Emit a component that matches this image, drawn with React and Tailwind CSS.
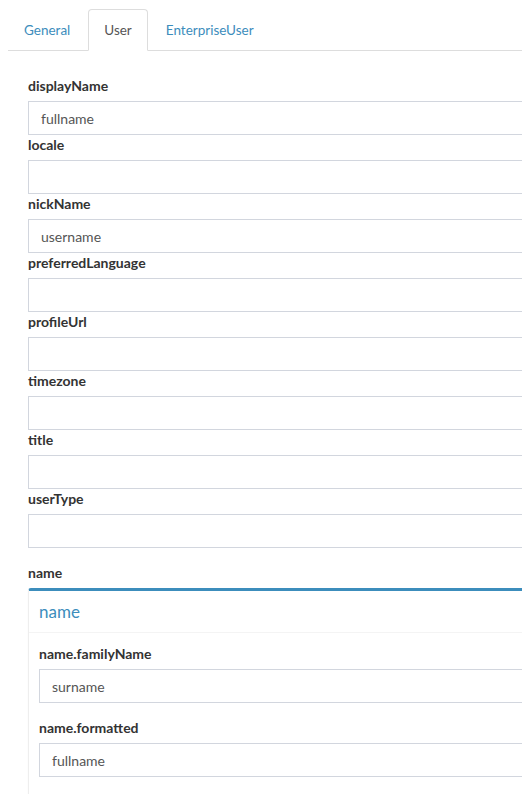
import React from "react";

const fields = [
  ["displayName", "fullname"],
  ["locale", ""],
  ["nickName", "username"],
  ["preferredLanguage", ""],
  ["profileUrl", ""],
  ["timezone", ""],
  ["title", ""],
  ["userType", ""],
];

function Field({ label, value, gap }) {
  return (
    <div className={gap ? "mb-[15px]" : ""}>
      <div className="text-[14px] leading-[20px] font-bold text-[#333] mb-[5px]">{label}</div>
      <div className="h-[34px] border border-[#d2d6de] px-[12px] flex items-center text-[14px] text-[#555]">
        {value}
      </div>
    </div>
  );
}

export default function App() {
  return (
    <div
      className="w-[522px] h-[794px] overflow-hidden bg-white"
      style={{ fontFamily: "Lato, 'Open Sans', sans-serif" }}
    >
      <div className="w-[640px] pl-2 pt-[9px]">
        <div className="flex border-b border-[#ddd] text-[13.5px] leading-[20px]">
          <div className="mr-[2px] -mb-px px-[15px] py-[10px] border border-transparent text-[#3c8dbc]">General</div>
          <div className="mr-[2px] -mb-px px-[15px] py-[10px] border border-[#ddd] border-b-white rounded-t-[4px] bg-white text-[#555]">User</div>
          <div className="mr-[2px] -mb-px px-[15px] py-[10px] border border-transparent text-[#3c8dbc]">EnterpriseUser</div>
        </div>
        <div className="pl-5 pt-[25px]">
          {fields.map(([l, v]) => (
            <Field key={l} label={l} value={v} />
          ))}
          <div className="mt-[15px]">
            <div className="text-[14px] leading-[20px] font-bold text-[#333] mb-[5px]">name</div>
            <div className="border-t-[3px] border-t-[#3c8dbc] border-l border-l-[#eee] rounded-t-[3px] shadow-[0_1px_1px_rgba(0,0,0,0.1)]">
              <div className="h-[42px] px-[10px] flex items-center border-b border-[#f4f4f4] text-[17px] text-[#3c8dbc]">
                name
              </div>
              <div className="p-[10px] pt-[11px]">
                <Field label="name.familyName" value="surname" gap />
                <Field label="name.formatted" value="fullname" gap />
              </div>
            </div>
          </div>
        </div>
      </div>
    </div>
  );
}
